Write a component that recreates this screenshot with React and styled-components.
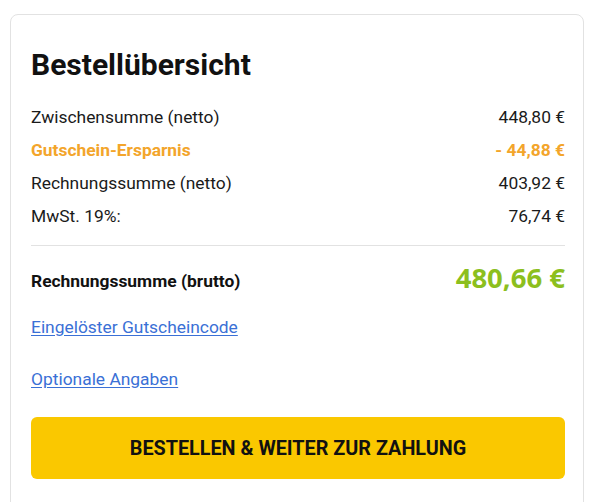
import React from "react";
import styled, { createGlobalStyle } from "styled-components";

const GlobalStyle = createGlobalStyle`
  body {
    margin: 0;
    background: #fff;
    font-family: Roboto, "Liberation Sans", sans-serif;
    color: #111;
  }
`;

const Page = styled.div`
  padding: 14px 8px 0 10px;
`;

const Card = styled.div`
  border: 1px solid #e2e2e2;
  border-radius: 8px;
  padding: 32px 18px 40px 20px;
  background: #fff;
`;

const Title = styled.h2`
  margin: 0 0 17px;
  font-size: 30px;
  font-weight: 700;
  line-height: 36px;
  color: #111;
`;

const Row = styled.div`
  display: flex;
  justify-content: space-between;
  align-items: center;
  height: 33px;
  font-size: 17.4px;
  font-weight: ${(p) => (p.$accent ? 700 : 400)};
  color: ${(p) => (p.$accent ? "#f3a52b" : "#1a1a1a")};
`;

const Divider = styled.hr`
  border: 0;
  border-top: 1px solid #e2e2e2;
  margin: 13px 0 0;
`;

const TotalRow = styled.div`
  display: flex;
  justify-content: space-between;
  align-items: center;
  height: 70px;
`;

const TotalLabel = styled.span`
  font-size: 17.4px;
  font-weight: 700;
  color: #111;
`;

const TotalValue = styled.span`
  font-family: "Open Sans", Roboto, sans-serif;
  font-size: 27.5px;
  font-weight: 700;
  color: #8cbf1e;
  margin-bottom: 7px;
`;

const LinkLine = styled.a`
  display: block;
  font-size: 17.4px;
  color: #3a70d6;
  text-decoration: underline;
  text-underline-offset: 2px;
  line-height: 22px;
  margin-top: ${(p) => p.$gap}px;
  cursor: pointer;
`;

const Button = styled.button`
  display: block;
  width: 100%;
  height: 62px;
  margin-top: 27px;
  border: 0;
  border-radius: 6px;
  background: #fac800;
  color: #111;
  font-family: Roboto, "Liberation Sans", sans-serif;
  font-size: 19.8px;
  font-weight: 700;
  cursor: pointer;
`;

const rows = [
  ["Zwischensumme (netto)", "448,80 €"],
  ["Gutschein-Ersparnis", "- 44,88 €", true],
  ["Rechnungssumme (netto)", "403,92 €"],
  ["MwSt. 19%:", "76,74 €"],
];

export default function App() {
  return (
    <Page>
      <GlobalStyle />
      <Card>
        <Title>Bestellübersicht</Title>
        {rows.map(([label, value, accent]) => (
          <Row key={label} $accent={accent}>
            <span>{label}</span>
            <span>{value}</span>
          </Row>
        ))}
        <Divider />
        <TotalRow>
          <TotalLabel>Rechnungssumme (brutto)</TotalLabel>
          <TotalValue>480,66 €</TotalValue>
        </TotalRow>
        <LinkLine $gap={0}>Eingelöster Gutscheincode</LinkLine>
        <LinkLine $gap={30}>Optionale Angaben</LinkLine>
        <Button>BESTELLEN &amp; WEITER ZUR ZAHLUNG</Button>
      </Card>
    </Page>
  );
}
